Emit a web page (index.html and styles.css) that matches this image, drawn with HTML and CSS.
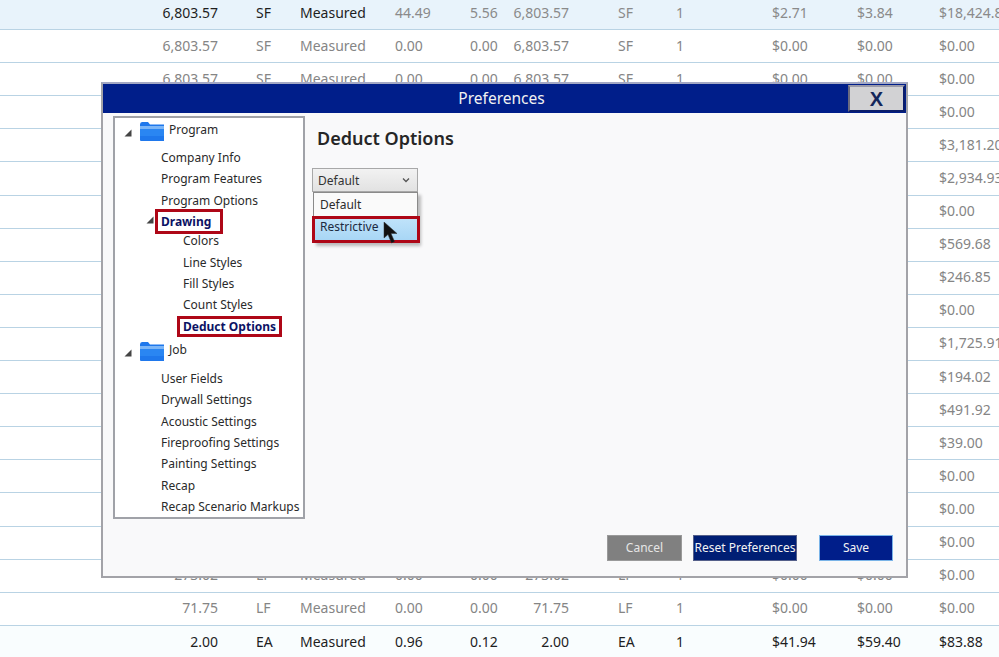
FILE: index.html
```html
<!DOCTYPE html>
<html lang="en">
<head>
<meta charset="utf-8">
<title>Preferences</title>
<link rel="stylesheet" href="styles.css">
</head>
<body>
<div class="page">
  <div class="grid">
    <div class="row active"><span class="c qty">6,803.57</span><span class="c u">SF</span><span class="c m">Measured</span><span class="c a mute">44.49</span><span class="c b mute">5.56</span><span class="c q2 mute">6,803.57</span><span class="c u2 mute">SF</span><span class="c n mute">1</span><span class="c p1 mute">$2.71</span><span class="c p2 mute">$3.84</span><span class="c t mute">$18,424.87</span></div>
    <div class="row off"><span class="c qty">6,803.57</span><span class="c u">SF</span><span class="c m">Measured</span><span class="c a">0.00</span><span class="c b">0.00</span><span class="c q2">6,803.57</span><span class="c u2">SF</span><span class="c n">1</span><span class="c p1">$0.00</span><span class="c p2">$0.00</span><span class="c t">$0.00</span></div>
    <div class="row off"><span class="c qty">6,803.57</span><span class="c u">SF</span><span class="c m">Measured</span><span class="c a">0.00</span><span class="c b">0.00</span><span class="c q2">6,803.57</span><span class="c u2">SF</span><span class="c n">1</span><span class="c p1">$0.00</span><span class="c p2">$0.00</span><span class="c t">$0.00</span></div>
    <div class="row off"><span class="c t">$0.00</span></div>
    <div class="row off"><span class="c t">$3,181.20</span></div>
    <div class="row off"><span class="c t">$2,934.93</span></div>
    <div class="row off"><span class="c t">$0.00</span></div>
    <div class="row off"><span class="c t">$569.68</span></div>
    <div class="row off"><span class="c t">$246.85</span></div>
    <div class="row off"><span class="c t">$0.00</span></div>
    <div class="row off"><span class="c t">$1,725.91</span></div>
    <div class="row off"><span class="c t">$194.02</span></div>
    <div class="row off"><span class="c t">$491.92</span></div>
    <div class="row off"><span class="c t">$39.00</span></div>
    <div class="row off"><span class="c t">$0.00</span></div>
    <div class="row off"><span class="c t">$0.00</span></div>
    <div class="row off"><span class="c t">$0.00</span></div>
    <div class="row off"><span class="c qty">273.02</span><span class="c u">LF</span><span class="c m">Measured</span><span class="c a">0.00</span><span class="c b">0.00</span><span class="c q2">273.02</span><span class="c u2">LF</span><span class="c n">1</span><span class="c p1">$0.00</span><span class="c p2">$0.00</span><span class="c t">$0.00</span></div>
    <div class="row off"><span class="c qty">71.75</span><span class="c u">LF</span><span class="c m">Measured</span><span class="c a">0.00</span><span class="c b">0.00</span><span class="c q2">71.75</span><span class="c u2">LF</span><span class="c n">1</span><span class="c p1">$0.00</span><span class="c p2">$0.00</span><span class="c t">$0.00</span></div>
    <div class="row last"><span class="c qty">2.00</span><span class="c u">EA</span><span class="c m">Measured</span><span class="c a">0.96</span><span class="c b">0.12</span><span class="c q2">2.00</span><span class="c u2">EA</span><span class="c n">1</span><span class="c p1">$41.94</span><span class="c p2">$59.40</span><span class="c t">$83.88</span></div>
  </div>

  <section class="dialog">
    <header class="titlebar">
      <h1 class="title">Preferences</h1>
      <button class="close" type="button">X</button>
    </header>
    <div class="body">
      <div class="main">
        <nav class="tree">
          <div class="group">
            <svg class="tri" width="8" height="8" viewBox="0 0 8 8"><path d="M7.5 0.5V7.5H0.5Z" fill="#444"/></svg>
            <svg class="folder" width="26" height="21" viewBox="0 0 26 21"><path d="M1 3.5Q1 1 3 1H9L11 3.5H25V20H2Q1 20 1 19Z" fill="#1f78ec"/><path d="M1 5H25V8H1Z" fill="#7cb6f7"/><path d="M1 8H25V15H1Z" fill="#2a86f2"/></svg>
            <span class="group-name">Program</span>
          </div>
          <ul class="items">
            <li class="item">Company Info</li>
            <li class="item">Program Features</li>
            <li class="item">Program Options</li>
            <li class="item parent">
              <svg class="tri tri-sub" width="8" height="8" viewBox="0 0 8 8"><path d="M7.5 0.5V7.5H0.5Z" fill="#444"/></svg>
              <span class="sel mark mark-wide">Drawing</span>
            </li>
          </ul>
          <ul class="items sub">
            <li class="item">Colors</li>
            <li class="item">Line Styles</li>
            <li class="item">Fill Styles</li>
            <li class="item">Count Styles</li>
            <li class="item"><span class="sel mark">Deduct Options</span></li>
          </ul>
          <div class="group job">
            <svg class="tri" width="8" height="8" viewBox="0 0 8 8"><path d="M7.5 0.5V7.5H0.5Z" fill="#444"/></svg>
            <svg class="folder" width="26" height="21" viewBox="0 0 26 21"><path d="M1 3.5Q1 1 3 1H9L11 3.5H25V20H2Q1 20 1 19Z" fill="#1f78ec"/><path d="M1 5H25V8H1Z" fill="#7cb6f7"/><path d="M1 8H25V15H1Z" fill="#2a86f2"/></svg>
            <span class="group-name">Job</span>
          </div>
          <ul class="items">
            <li class="item">User Fields</li>
            <li class="item">Drywall Settings</li>
            <li class="item">Acoustic Settings</li>
            <li class="item">Fireproofing Settings</li>
            <li class="item">Painting Settings</li>
            <li class="item">Recap</li>
            <li class="item">Recap Scenario Markups</li>
          </ul>
        </nav>
        <div class="content">
          <h2 class="heading">Deduct Options</h2>
          <div class="combo">
            <span>Default</span>
            <svg width="8" height="6" viewBox="0 0 8 6"><path d="M1 1.5L4 4.5L7 1.5" fill="none" stroke="#555" stroke-width="1.3"/></svg>
            <div class="popup">
              <div class="opt">Default</div>
              <div class="opt hover">Restrictive</div>
              <svg class="cursor" width="16" height="22" viewBox="0 0 16 22"><path d="M1 0L1 16L5 12.5L8.5 21L11.5 19.5L8 11.5L14 11.5Z" fill="#111" stroke="#333" stroke-width=".5"/></svg>
            </div>
          </div>
        </div>
      </div>
      <footer class="actions">
        <button class="btn cancel" type="button">Cancel</button>
        <button class="btn reset" type="button">Reset Preferences</button>
        <button class="btn save" type="button">Save</button>
      </footer>
    </div>
  </section>
</div>
</body>
</html>
```
FILE: styles.css
```css
* { box-sizing: border-box; }
html, body { margin: 0; padding: 0; }
body { background: #fff; font-family: "Noto Sans", "Open Sans", "Liberation Sans", sans-serif; color: #222; }
.page { position: relative; width: 999px; height: 657px; overflow: hidden; }

.grid { margin-top: -3px; }
.row {
  display: grid;
  grid-template-columns: 218px 82px 95px 75px 35px 64px 107px 96px 85px 82px 82px;
  height: 33.1px;
  padding-bottom: 2px;
  align-items: center;
  font-size: 14px;
  white-space: nowrap;
  border-bottom: 1px solid #b9d3e4;
  color: #858585;
}
.row.active { background: #e8f3fb; }
.row.active .qty, .row.active .u, .row.active .m { color: #1e1e1e; }
.row.active .mute { color: #8a8a8a; }
.row.last { color: #1e1e1e; background: #f9fdfe; border-bottom: 0; }
.c { grid-row: 1; }
.qty { grid-column: 1; text-align: right; }
.u { grid-column: 2; padding-left: 38px; }
.m { grid-column: 3; }
.a { grid-column: 4; }
.b { grid-column: 5; }
.q2 { grid-column: 6; text-align: right; }
.u2 { grid-column: 7; padding-left: 49px; }
.n { grid-column: 8; }
.p1 { grid-column: 9; }
.p2 { grid-column: 10; }
.t { grid-column: 11; }

.dialog {
  position: absolute;
  left: 101px;
  top: 82px;
  width: 807px;
  height: 496px;
  display: flex;
  flex-direction: column;
  background: #f9f9fa;
  border: 2px solid #a3a3a8;
  border-top-color: #a3a8c4;
}
.titlebar {
  position: relative;
  flex: none;
  height: 29px;
  padding: 0 6px 2px 0;
  background: #001e8a;
  display: flex;
  align-items: center;
  justify-content: center;
}
.title { margin: 0; font-size: 15.5px; font-weight: 400; color: #f2f2f2; }
.close {
  position: absolute;
  right: 1px;
  top: 1px;
  width: 57px;
  height: 27px;
  padding: 0;
  background: #d2d2d4;
  border: 2px solid #0a1d6a;
  border-top-color: #9a9aa8;
  border-left-color: #6a6a80;
  color: #14265a;
  font: 700 20px/1 "Liberation Sans", sans-serif;
}
.body { flex: 1; display: flex; flex-direction: column; }
.main { display: flex; height: 405px; padding: 3px 0 0 10px; }
.tree {
  flex: none;
  width: 192px;
  height: 403px;
  background: #fff;
  border: 2px solid #a0a2a8;
  font-size: 12px;
  color: #2a2a2a;
  padding-top: 2px;
  white-space: nowrap;
}
.group { display: flex; align-items: flex-start; height: 27px; padding: 0 0 0 9px; }
.group.job { height: 28px; margin-top: 3px; }
.tri { flex: none; margin-top: 9px; }
.folder { flex: none; margin: 1px 4px 0 7px; }
.group-name { line-height: 17px; margin-top: 1px; }
.items { list-style: none; margin: 0; padding: 0 0 0 46px; }
.items.sub { margin-top: -2px; padding-left: 68px; }
.item { height: 21.33px; line-height: 21px; }
.parent { position: relative; }
.tri-sub { position: absolute; left: -15px; top: 5px; margin: 0; }
.sel { color: #0c1264; font-weight: 700; }
.mark {
  display: inline-block;
  vertical-align: top;
  line-height: 15px;
  margin: 0 -6px;
  padding: 0 3px;
  border: 3px solid #ae0717;
}
.mark-wide { margin-top: -2px; padding: 2px 9px 2px 3px; }
.content { flex: 1; padding: 9px 0 0 7px; }
.heading { margin: 0 0 0 5px; font-size: 18px; line-height: 26px; font-weight: 600; color: #262626; }
.combo {
  position: relative;
  width: 106px;
  height: 24px;
  margin-top: 17px;
  padding: 0 7px 0 5px;
  display: flex;
  align-items: center;
  justify-content: space-between;
  background: linear-gradient(#f2f2f2, #e2e2e2);
  border: 1px solid #a8a8a8;
  font-size: 12px;
  color: #333;
}
.popup {
  position: absolute;
  left: 0;
  top: 23px;
  width: 105px;
  height: 51px;
  background: #fafafa;
  border: 1px solid #8a8a8a;
  box-shadow: 3px 3px 3px rgba(0,0,0,.25);
  padding: 1px;
}
.opt { height: 23px; line-height: 21px; padding-left: 5px; color: #2c2c2c; }
.opt.hover {
  position: absolute;
  left: -2px;
  top: 23px;
  width: 108px;
  height: 27px;
  line-height: 15px;
  padding: 0 0 0 5px;
  background: linear-gradient(#bfe3fa, #a8d6f5);
  border: 3px solid #ae0717;
  color: #1d2a40;
}
.cursor { position: absolute; left: 69px; top: 29px; }
.actions { flex: 1; display: flex; align-items: flex-start; padding: 17px 0 0 504px; }
.btn {
  height: 26px;
  padding: 0;
  font: 12px/1 "Noto Sans", "Open Sans", sans-serif;
  color: #f3f3f3;
  border: 1px solid #9a9a9a;
}
.cancel { width: 75px; background: #808080; color: #e6e6e6; }
.reset { width: 104px; margin-left: 11px; background: #001e74; border-color: #55608a; white-space: nowrap; }
.save { width: 74px; margin-left: 22px; background: #001e8a; border-color: #7ab4e8; }
```
